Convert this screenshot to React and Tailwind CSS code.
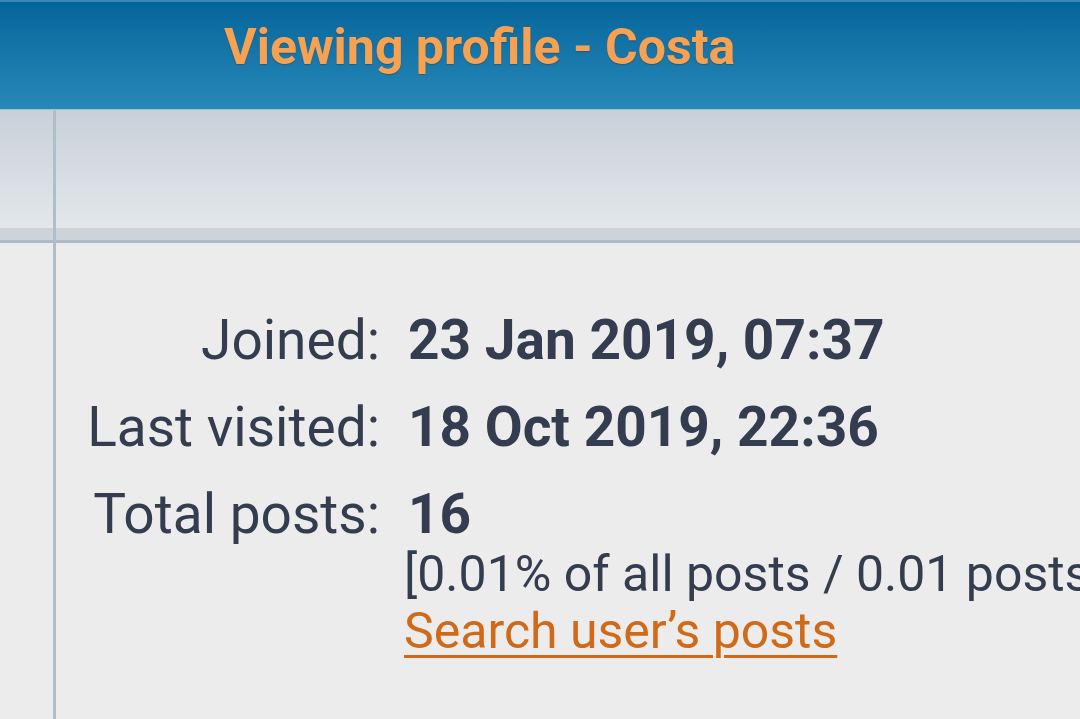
import React from 'react';

function Row({ label, children }) {
  return (
    <div className="flex items-start">
      <div className="w-[380px] shrink-0 text-right">{label}</div>
      <div className="ml-[28px] font-bold whitespace-nowrap">{children}</div>
    </div>
  );
}

export default function App() {
  return (
    <div className="w-[1080px] h-[719px] overflow-hidden bg-[#ececec] font-['Roboto',sans-serif] text-[#333d4f]">
      <div className="h-[109px] bg-gradient-to-b from-[#04659b] to-[#2789b8] border-t-2 border-[#3a88b4] pl-[224px] pt-[17px]">
        <h1 className="text-[50px] leading-[56px] font-bold text-[#f7a253] [text-shadow:0_1px_1px_rgba(60,60,60,0.5)]">
          Viewing profile - Costa
        </h1>
      </div>
      <div className="flex border-t border-[#a9bac8]">
        <div className="w-[53px] shrink-0"></div>
        <div className="w-[3px] shrink-0 bg-[#b0bec9]"></div>
        <div className="flex-1"></div>
      </div>
      <div className="relative">
        <div className="absolute left-[53px] top-0 w-[3px] h-[620px] bg-[#b0bec9]"></div>
        <div className="h-[118px] bg-gradient-to-b from-[#c8d0d8] to-[#e3e7ea]"></div>
        <div className="h-[12px] bg-[#ccd3d9]"></div>
        <div className="h-[3px] bg-[#aebac5]"></div>
        <div className="pt-[54px] text-[55px] leading-[87px]">
          <Row label="Joined:">23 Jan 2019, 07:37</Row>
          <Row label="Last visited:">18 Oct 2019, 22:36</Row>
          <Row label="Total posts:">16</Row>
          <div className="pl-[404px] -mt-[12px] text-[50px] leading-[57px] whitespace-nowrap">
            <div>[0.01% of all posts / 0.01 posts per day]</div>
            <a href="#" className="text-[#d06a18] underline decoration-[3px] underline-offset-[7px]">Search user’s posts</a>
          </div>
        </div>
      </div>
    </div>
  );
}
